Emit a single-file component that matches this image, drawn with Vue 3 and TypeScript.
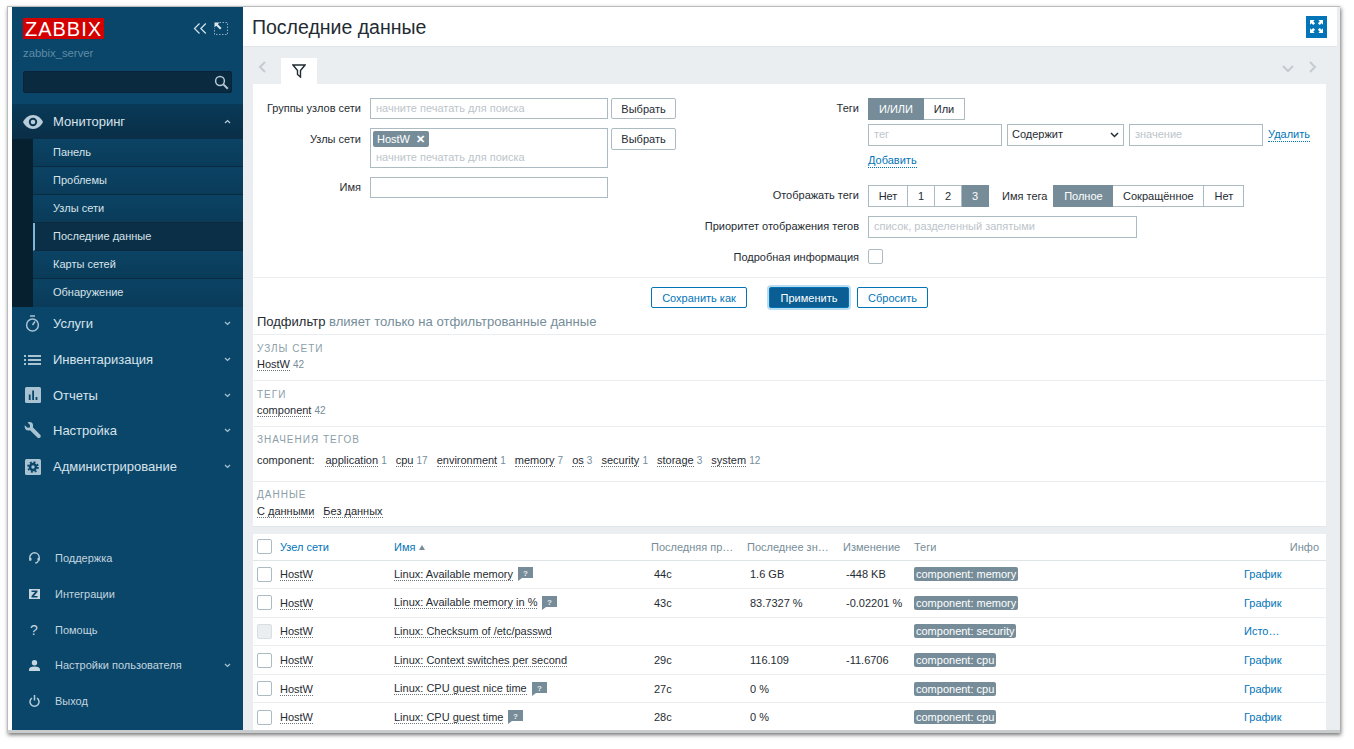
<script setup lang="ts">
const subItems = ['Панель', 'Проблемы', 'Узлы сети', 'Последние данные', 'Карты сетей', 'Обнаружение']
const mainItems = [
  { label: 'Услуги', icon: 'timer' },
  { label: 'Инвентаризация', icon: 'list' },
  { label: 'Отчеты', icon: 'chart' },
  { label: 'Настройка', icon: 'wrench' },
  { label: 'Администрирование', icon: 'gear' },
]
const footItems = [
  { label: 'Поддержка', icon: 'support', chevron: false },
  { label: 'Интеграции', icon: 'z', chevron: false },
  { label: 'Помощь', icon: 'help', chevron: false },
  { label: 'Настройки пользователя', icon: 'user', chevron: true },
  { label: 'Выход', icon: 'power', chevron: false },
]
const tagValues = [
  ['application', '1'], ['cpu', '17'], ['environment', '1'], ['memory', '7'],
  ['os', '3'], ['security', '1'], ['storage', '3'], ['system', '12'],
]
const rows = [
  { name: 'Linux: Available memory', help: true, last: '44с', value: '1.6 GB', change: '-448 KB', tag: 'component: memory', link: 'График', off: false },
  { name: 'Linux: Available memory in %', help: true, last: '43с', value: '83.7327 %', change: '-0.02201 %', tag: 'component: memory', link: 'График', off: false },
  { name: 'Linux: Checksum of /etc/passwd', help: false, last: '', value: '', change: '', tag: 'component: security', link: 'История', off: true },
  { name: 'Linux: Context switches per second', help: false, last: '29с', value: '116.109', change: '-11.6706', tag: 'component: cpu', link: 'График', off: false },
  { name: 'Linux: CPU guest nice time', help: true, last: '27с', value: '0 %', change: '', tag: 'component: cpu', link: 'График', off: false },
  { name: 'Linux: CPU guest time', help: true, last: '28с', value: '0 %', change: '', tag: 'component: cpu', link: 'График', off: false },
]
</script>

<template>
  <div class="page">
    <div class="window">
      <aside class="sidebar">
        <div class="brand">
          <div class="logo">ZABBIX</div>
          <div class="brand-tools">
            <svg width="14" height="11" viewBox="0 0 14 11" fill="none" stroke="#d5e2ea" stroke-width="1.200"><path d="M6.500.5 1.500 5.500l5 5M12.800.5l-5 5 5 5" /></svg>
            <svg width="14" height="13" viewBox="0 0 14 13" fill="none"><path d="M5.500.5h8v12h-13V6" stroke="#8fadc0" stroke-dasharray="1.500 1.500" /><path d="M.5.5h5L3.800 2.200 7.500 6 6 7.500 2.200 3.800.5 5.500z" fill="#dbe6ec" /></svg>
          </div>
        </div>
        <div class="server">zabbix_server</div>
        <div class="search">
          <svg width="15" height="15" viewBox="0 0 15 15" fill="none" stroke="#b5c8d4" stroke-width="1.500"><circle cx="6" cy="6" r="4.400" /><path d="m9.400 9.400 4.400 4.400" stroke-width="2" /></svg>
        </div>

        <nav class="nav">
          <div class="nav-item open">
            <span class="nav-icon">
              <svg width="20" height="14" viewBox="0 0 20 14"><path d="M10 0C5.500 0 2 3 0 7c2 4 5.500 7 10 7s8-3 10-7c-2-4-5.500-7-10-7z" fill="#b9cdd9" /><circle cx="10" cy="7" r="4.200" fill="#0a3552" /><circle cx="10" cy="7" r="2.300" fill="#b9cdd9" /></svg>
            </span>
            <span class="nav-label">Мониторинг</span>
            <svg class="chev" width="7" height="5" viewBox="0 0 7 5" fill="none" stroke="#b9cdd9" stroke-width="1.200"><path d="m1 4 2.500-2.500L6 4" /></svg>
          </div>
          <ul class="submenu">
            <li v-for="item in subItems" :key="item" :class="{ active: item === 'Последние данные' }">{{ item }}</li>
          </ul>
          <div v-for="item in mainItems" :key="item.label" class="nav-item">
            <span class="nav-icon">
              <svg v-if="item.icon === 'timer'" width="15" height="17" viewBox="0 0 15 17" fill="none" stroke="#a9c3d3" stroke-width="1.500"><circle cx="7.500" cy="10" r="5.900" /><path d="M5 1h5M7.500 10l2.500-3.500" /></svg>
              <svg v-else-if="item.icon === 'list'" width="17" height="10" viewBox="0 0 17 10" fill="#a9c3d3"><path d="M0 0h2v2H0zM4 0h13v2H4zM0 4h2v2H0zM4 4h13v2H4zM0 8h2v2H0zM4 8h13v2H4z" /></svg>
              <svg v-else-if="item.icon === 'chart'" width="16" height="16" viewBox="0 0 16 16"><rect width="16" height="16" rx="1.500" fill="#a9c3d3" /><path d="M3.800 7.500h1.800V13H3.800zM7.200 3.500H9V13H7.200zM10.600 10h1.800v3h-1.800z" fill="#0a466a" /></svg>
              <svg v-else-if="item.icon === 'wrench'" width="17" height="17" viewBox="0 0 17 17"><path d="M.8 3.200 3.400 5.800 5.800 5.500 6 3 3.600.6C5.800-.5 8.300.3 8.900 2.500c.3 1 .2 2-.1 2.800l7.400 7.400c.8.800.8 2 0 2.800-.8.800-2 .8-2.800 0L6 8.300c-2.200.8-4.500.1-5.100-2.200-.2-1-.3-2-.1-2.900z" fill="#a9c3d3" /></svg>
              <svg v-else width="16" height="16" viewBox="0 0 16 16"><rect width="16" height="16" rx="1.500" fill="#a9c3d3" /><circle cx="8" cy="8" r="4.900" fill="none" stroke="#0a466a" stroke-width="1.800" stroke-dasharray="1.950 1.900" /><circle cx="8" cy="8" r="4.200" fill="#0a466a" /><circle cx="8" cy="8" r="1.700" fill="#a9c3d3" /></svg>
            </span>
            <span class="nav-label">{{ item.label }}</span>
            <svg class="chev" width="7" height="5" viewBox="0 0 7 5" fill="none" stroke="#a9c3d3" stroke-width="1.200"><path d="m1 1 2.500 2.500L6 1" /></svg>
          </div>
        </nav>

        <div class="foot">
          <div v-for="item in footItems" :key="item.label" class="foot-item">
            <span class="foot-icon">
              <svg v-if="item.icon === 'support'" width="11" height="12" viewBox="0 0 11 12" fill="none" stroke="#b5cbd8" stroke-width="1.500"><path d="M1.500 8.500C.9 7.800.8 6.700.8 5.500a4.700 4.700 0 0 1 9.400 0c0 1.200-.1 2.300-.7 3" /><path d="M9.500 8.500c-.5 1.500-1.800 2.500-3.500 2.500" stroke-width="1.100" /><path d="M1.400 6v2.500M9.600 6v2.500" stroke-width="2.200" /></svg>
              <svg v-else-if="item.icon === 'z'" width="11" height="10" viewBox="0 0 11 10"><rect width="11" height="10" fill="#c5d6e0" /><path d="M2.500 1.500h6V3L5 7h3.500v1.500h-6V7L6 3H2.500z" fill="#0a466a" /></svg>
              <span v-else-if="item.icon === 'help'" class="q">?</span>
              <svg v-else-if="item.icon === 'user'" width="11" height="11" viewBox="0 0 11 11" fill="#c5d6e0"><circle cx="5.500" cy="2.700" r="2.700" /><path d="M0 11V9.500C0 7.700 2.200 6.500 5.500 6.500S11 7.700 11 9.500V11z" /></svg>
              <svg v-else width="11" height="12" viewBox="0 0 11 12" fill="none" stroke="#b5cbd8" stroke-width="1.500"><path d="M3 3a4.500 4.500 0 1 0 5 0M5.500 0v5.500" /></svg>
            </span>
            <span class="foot-label">{{ item.label }}</span>
            <svg v-if="item.chevron" class="chev" width="7" height="5" viewBox="0 0 7 5" fill="none" stroke="#a9c3d3" stroke-width="1.200"><path d="m1 1 2.500 2.500L6 1" /></svg>
          </div>
        </div>
      </aside>

      <main class="main">
        <header class="header">
          <h1>Последние данные</h1>
          <button class="kiosk" type="button" aria-label="Kiosk">
            <svg width="13" height="13" viewBox="0 0 14 14" fill="#fff"><path d="M0 0h5L3.500 1.500 5.500 3.500 3.500 5.500 1.500 3.500 0 5zM14 0v5l-1.500-1.500-2 2-2-2 2-2L9 0zM0 14V9l1.500 1.500 2-2 2 2-2 2L5 14zM14 14H9l1.500-1.500-2-2 2-2 2 2L14 9z" /></svg>
          </button>
        </header>

        <div class="tabs">
          <svg class="tab-arrow first" width="8" height="12" viewBox="0 0 8 12" fill="none" stroke="#c3ccd1" stroke-width="2"><path d="M7 1 2 6l5 5" /></svg>
          <div class="tab">
            <svg width="14" height="14" viewBox="0 0 14 14" fill="none" stroke="#1f2c33" stroke-width="1.400"><path d="M1 1h12L8.500 6.500V13L5.500 10.500v-4z" /></svg>
          </div>
          <span class="spacer"></span>
          <svg width="12" height="8" viewBox="0 0 12 8" fill="none" stroke="#c3ccd1" stroke-width="2"><path d="m1 1 5 5 5-5" /></svg>
          <svg class="tab-arrow last" width="8" height="12" viewBox="0 0 8 12" fill="none" stroke="#c3ccd1" stroke-width="2"><path d="m1 1 5 5-5 5" /></svg>
        </div>

        <section class="panel">
          <div class="filter">
            <div class="filter-left">
              <label class="f-label">Группы узлов сети</label>
              <div class="input ph">начните печатать для поиска</div>
              <button class="btn-sel" type="button">Выбрать</button>
              <label class="f-label top">Узлы сети</label>
              <div class="input multi">
                <span class="chip">HostW <b>✕</b></span>
                <span class="ph-line">начните печатать для поиска</span>
              </div>
              <button class="btn-sel sel2" type="button">Выбрать</button>
              <label class="f-label">Имя</label>
              <div class="input"></div>
            </div>
            <div class="filter-right">
              <label class="f-label">Теги</label>
              <div class="segs">
                <span class="seg on">И/ИЛИ</span><span class="seg w41">Или</span>
              </div>
              <span></span>
              <div class="tag-line">
                <div class="input ph w134">тег</div>
                <div class="input select">Содержит
                  <svg width="9" height="6" viewBox="0 0 9 6" fill="none" stroke="#1f2c33" stroke-width="1.500"><path d="m1 1 3.500 3.500L8 1" /></svg>
                </div>
                <div class="input ph w134">значение</div>
                <a class="link dotted">Удалить</a>
              </div>
              <span></span>
              <a class="link dotted add">Добавить</a>
              <label class="f-label show">Отображать теги</label>
              <div class="show-line">
                <div class="segs">
                  <span class="seg w40">Нет</span><span class="seg w27">1</span><span class="seg w27">2</span><span class="seg on w27">3</span>
                </div>
                <span class="tag-name">Имя тега</span>
                <div class="segs">
                  <span class="seg on w60">Полное</span><span class="seg w91">Сокращённое</span><span class="seg w40">Нет</span>
                </div>
              </div>
              <label class="f-label">Приоритет отображения тегов</label>
              <div class="input ph w269">список, разделенный запятыми</div>
              <label class="f-label">Подробная информация</label>
              <span class="check"></span>
            </div>
          </div>

          <div class="actions">
            <button class="btn" type="button">Сохранить как</button>
            <button class="btn primary" type="button">Применить</button>
            <button class="btn" type="button">Сбросить</button>
          </div>

          <div class="sub-title">Подфильтр <span>влияет только на отфильтрованные данные</span></div>

          <div class="sub-block">
            <div class="sub-head">УЗЛЫ СЕТИ</div>
            <div class="sub-items"><span><a class="dotted">HostW</a> <i>42</i></span></div>
          </div>
          <div class="sub-block">
            <div class="sub-head">ТЕГИ</div>
            <div class="sub-items"><span><a class="dotted">component</a> <i>42</i></span></div>
          </div>
          <div class="sub-block values">
            <div class="sub-head">ЗНАЧЕНИЯ ТЕГОВ</div>
            <div class="sub-items">
              <span class="tag-key">component:</span>
              <span v-for="t in tagValues" :key="t[0]"><a class="dotted">{{ t[0] }}</a> <i>{{ t[1] }}</i></span>
            </div>
          </div>
          <div class="sub-block">
            <div class="sub-head">ДАННЫЕ</div>
            <div class="sub-items"><span><a class="dotted">С данными</a></span><span><a class="dotted">Без данных</a></span></div>
          </div>
        </section>

        <section class="table">
          <div class="tr th">
            <div><span class="check"></span></div>
            <div class="blue">Узел сети</div>
            <div class="blue">Имя <em class="sort"></em></div>
            <div class="clip">Последняя проверка</div>
            <div class="clip">Последнее значение</div>
            <div>Изменение</div>
            <div>Теги</div>
            <div class="info">Инфо</div>
          </div>
          <div v-for="row in rows" :key="row.name" class="tr">
            <div><span class="check" :class="{ disabled: row.off }"></span></div>
            <div><a class="dotted">HostW</a></div>
            <div class="name">
              <a class="dotted">{{ row.name }}</a>
              <svg v-if="row.help" class="help" width="15" height="14" viewBox="0 0 15 14"><path d="M0 0h15v11H4l-4 3z" fill="#768d99" /><text x="7.500" y="8.500" font-size="8" font-family="Liberation Sans, sans-serif" font-weight="700" fill="#e6ebee" text-anchor="middle">?</text></svg>
            </div>
            <div class="pad">{{ row.last }}</div>
            <div class="pad">{{ row.value }}</div>
            <div class="pad">{{ row.change }}</div>
            <div><span class="tag">{{ row.tag }}</span></div>
            <div class="clip linkcell">{{ row.link }}</div>
          </div>
        </section>
      </main>
    </div>
  </div>
</template>

<style>
html, body { margin: 0; background: #fff; overflow: hidden; }
</style>

<style scoped>
.page { width: 1354px; height: 749px; padding: 6px 0 0 7px; box-sizing: border-box; font-family: "Liberation Sans", Arial, sans-serif; font-size: 11px; color: #1f2c33; }
.window { display: flex; width: 1333px; height: 727px; padding-left: 4px; box-sizing: border-box; background: #fff; border-top: 1px solid #b9bdbf; border-left: 1px solid #b9bdbf; border-bottom: 3px solid #c9cccd; box-shadow: 1px 2px 4px rgba(0, 0, 0, 0.55); overflow: hidden; }
.sidebar { width: 231px; flex: none; display: flex; flex-direction: column; background: #0a466a; color: #d7e3ea; }
.brand { display: flex; align-items: center; justify-content: space-between; padding: 11px 11px 0 11px; }
.logo { width: 81px; height: 21px; line-height: 22px; background: #d40000; color: #fff; font-size: 20px; letter-spacing: 1px; text-align: center; overflow: hidden; }
.brand-tools { display: flex; align-items: center; gap: 7px; margin-right: 4px; }
.server { margin: 7px 0 0 11px; height: 14px; line-height: 14px; font-size: 11.300px; color: #5f8ba6; }
.search { display: flex; align-items: center; justify-content: flex-end; margin: 11px 11px 0; height: 22px; padding-right: 2px; background: #0a2a40; border: 1px solid #08233a; border-radius: 2px; box-sizing: border-box; }
.nav { margin-top: 11px; }
.nav-item { display: flex; align-items: center; height: 35.700px; padding-left: 11px; padding-right: 12px; }
.nav-item.open { height: 35px; background: linear-gradient(#083a58, #0a2e46); }
.nav-icon { width: 19px; display: flex; justify-content: center; align-items: center; }
.open .nav-icon { width: 20px; }
.nav-label { padding-left: 11px; flex: 1; font-size: 13px; color: #d7e3ea; }
.open .nav-label { padding-left: 10px; }
.chev { flex: none; margin-left: auto; }
.submenu { list-style: none; margin: 0 0 -1px; padding: 0 0 0 21px; background: #06202f; }
.submenu li { height: 28px; line-height: 27px; padding-left: 20px; box-sizing: border-box; font-size: 11px; color: #d7e3ea; background: linear-gradient(#0b4364, #0a3b59); border-bottom: 1px solid #0a2a3f; }
.submenu li:last-child { border-bottom: 0; }
.submenu li.active { background: #0a2f47; border-left: 2px solid #7db6d6; padding-left: 18px; }
.foot { margin-top: auto; padding-bottom: 11px; }
.foot-item { display: flex; align-items: center; height: 35.800px; padding: 0 12px 0 15px; }
.foot-icon { width: 14px; display: flex; justify-content: center; }
.foot-label { padding-left: 14px; font-size: 11px; color: #c2d4df; }
.q { font-size: 14px; line-height: 14px; color: #c5d6e0; }

.main { flex: 1; min-width: 0; display: flex; flex-direction: column; background: #ebeef0; }
.header { flex: none; height: 40px; margin-right: 3px; padding: 1px 9px 0; display: flex; align-items: center; justify-content: space-between; background: #fff; border-bottom: 1px solid #e2e6e8; box-sizing: border-box; }
h1 { margin: 0; font-size: 19.500px; font-weight: 400; color: #1f2c33; }
.kiosk { width: 21px; height: 22px; margin-top: -1px; padding: 0; border: 0; background: #0275b8; display: flex; align-items: center; justify-content: center; margin-right: 1px; }
.tabs { flex: none; height: 37px; display: flex; align-items: flex-end; padding: 0 23px 0 15px; box-sizing: border-box; }
.tabs > svg { margin-bottom: 11px; }
.tab-arrow.first { margin-right: 15px; }
.tab-arrow.last { margin-left: 15px; }
.tab { width: 36px; height: 26px; background: #fff; display: flex; align-items: center; justify-content: center; }
.spacer { flex: 1; }
.panel { flex: none; margin: 0 10px 7px; width: 1073px; height: 443px; background: #fff; box-sizing: border-box; border-bottom: 1px solid #e2e6e8; }
.filter { display: flex; height: 194px; padding-top: 14px; box-sizing: border-box; border-bottom: 1px solid #ebeef0; }
.filter-left { width: 447px; flex: none; display: grid; grid-template-columns: 108px 238px auto; column-gap: 9px; grid-auto-rows: min-content; align-content: start; }
.filter-left .btn-sel { margin-left: -6px; }
.filter-left > :nth-child(n+4) { margin-top: 9px; }
.filter-right { flex: 1; display: grid; grid-template-columns: 159px 1fr; column-gap: 9px; grid-auto-rows: min-content; align-content: start; }
.f-label { text-align: right; line-height: 21px; white-space: nowrap; }
.f-label.top { line-height: 22px; }
.input { height: 21px; line-height: 19px; border: 1px solid #acbbc2; box-sizing: border-box; padding: 0 5px; background: #fff; white-space: nowrap; }
.ph, .ph-line { color: #bcc5ca; font-size: 11px; }
.multi { height: 40px; padding: 2px; }
.chip { display: flex; align-items: center; gap: 6px; width: fit-content; height: 16px; line-height: 16px; padding: 0 4px; background: #768d99; color: #fff; border-radius: 2px; font-size: 11px; }
.chip b { font-size: 11px; line-height: 16px; }
.ph-line { display: block; padding: 3px 3px 0; line-height: 14px; }
.btn-sel { width: 65px; height: 21px; padding: 0; background: #fff; border: 1px solid #acbbc2; border-radius: 2px; font: inherit; font-size: 11px; color: #1f2c33; }
.sel2 { height: 22px; align-self: start; }
.segs { display: flex; height: 22px; }
.seg { width: 56px; height: 22px; line-height: 20px; box-sizing: border-box; text-align: center; border: 1px solid #acbbc2; border-left-width: 0; font-size: 11px; background: #fff; }
.seg:first-child { border-left-width: 1px; }
.seg.on { background: #768d99; border-color: #768d99; color: #fff; }
.w41 { width: 41px; }
.w40 { width: 40px; }
.w27 { width: 27px; }
.w60 { width: 60px; }
.w91 { width: 91px; }
.w134 { width: 134px; }
.w269 { width: 269px; }
.tag-line { grid-column: 2; display: flex; gap: 5px; margin-top: 4px; height: 22px; align-items: stretch; }
.tag-line .input { height: 22px; line-height: 19px; }
.select { width: 117px; display: flex; align-items: center; justify-content: space-between; padding: 0 4px 1px; }
.link { color: #0275b8; }
.dotted { border-bottom: 1px dotted rgba(31, 44, 51, 0.65); }
.link.dotted { border-bottom-color: #0275b8; }
.tag-line .link { align-self: center; line-height: 13px; font-size: 11px; }
.add { justify-self: start; margin-top: 8px; font-size: 11px; line-height: 13px; }
.f-label.show { margin-top: 17px; }
.show-line { margin-top: 17px; display: flex; align-items: center; }
.tag-name { margin: 0 6px 0 13px; white-space: nowrap; }
.filter-right > :nth-child(n+9) { margin-top: 9px; }
.filter-right .input.w269 { height: 22px; }
.check { display: block; width: 15px; height: 15px; border: 1px solid #acbbc2; border-radius: 2px; box-sizing: border-box; background: #fff; }
.check.disabled { background: #ebeef0; border-color: #d8dee1; }
.filter-right > .check { margin-top: 11px; }
.actions { display: flex; justify-content: flex-start; padding-left: 398px; gap: 8px; height: 36px; padding-top: 9px; box-sizing: border-box; }
.btn { width: 96px; height: 21px; padding: 0; background: #fff; color: #0275b8; border: 1px solid #0275b8; border-radius: 2px; font: inherit; font-size: 11px; }
.btn.primary { width: 80px; margin-left: 14px; background: #0a5e93; color: #fff; box-shadow: 0 0 0 2px #bcdcf0; }
.btn:last-child { width: 71px; }
.sub-title { height: 20px; line-height: 15px; padding-left: 4px; font-size: 13px; border-bottom: 1px solid #ebeef0; }
.sub-title span { color: #768d99; font-size: 13.100px; }
.sub-block { height: 46px; padding: 7px 4px 0; box-sizing: border-box; border-bottom: 1px solid #ebeef0; }
.sub-block.values { height: 55px; padding-top: 6px; }
.sub-block:last-child { border-bottom: 0; padding-top: 6px; }
.sub-head { height: 13px; line-height: 13px; font-size: 10px; letter-spacing: 1px; color: #8b9ea8; }
.sub-items { display: flex; gap: 9px; margin-top: 2px; line-height: 15px; }
.sub-block:last-child .sub-items { margin-top: 3px; }
.values .sub-items { margin-top: 7px; }
.sub-items i { font-style: normal; font-size: 10px; color: #768d99; }
.tag-key { margin-right: 2px; }

.table { flex: 1; margin: 0 10px; width: 1073px; background: #fff; overflow: hidden; }
.tr { display: grid; grid-template-columns: 27px 114px 257px 96px 96px 71px 330px 82px; align-items: center; height: 28.600px; box-sizing: border-box; border-bottom: 1px solid #ebeef0; white-space: nowrap; }
.tr > :first-child { padding-left: 4px; }
.th { height: 26.500px; border-bottom: 1px solid #dfe4e7; color: #768d99; font-size: 11px; }
.blue { color: #0275b8; }
.clip { overflow: hidden; text-overflow: ellipsis; padding-right: 12px; box-sizing: border-box; }
.info { text-align: right; padding-right: 7px; }
.sort { display: inline-block; width: 0; height: 0; margin-left: 1px; border: 3px solid transparent; border-top: 0; border-bottom: 5px solid #768d99; vertical-align: 1px; }
.name { display: flex; align-items: center; gap: 5px; }
.pad { padding-left: 3px; }
.tag { display: inline-block; height: 14px; line-height: 14px; padding: 0 2px; background: #768d99; color: #fff; border-radius: 2px; font-size: 11px; }
.linkcell { color: #0275b8; padding-right: 42px; }
</style>
